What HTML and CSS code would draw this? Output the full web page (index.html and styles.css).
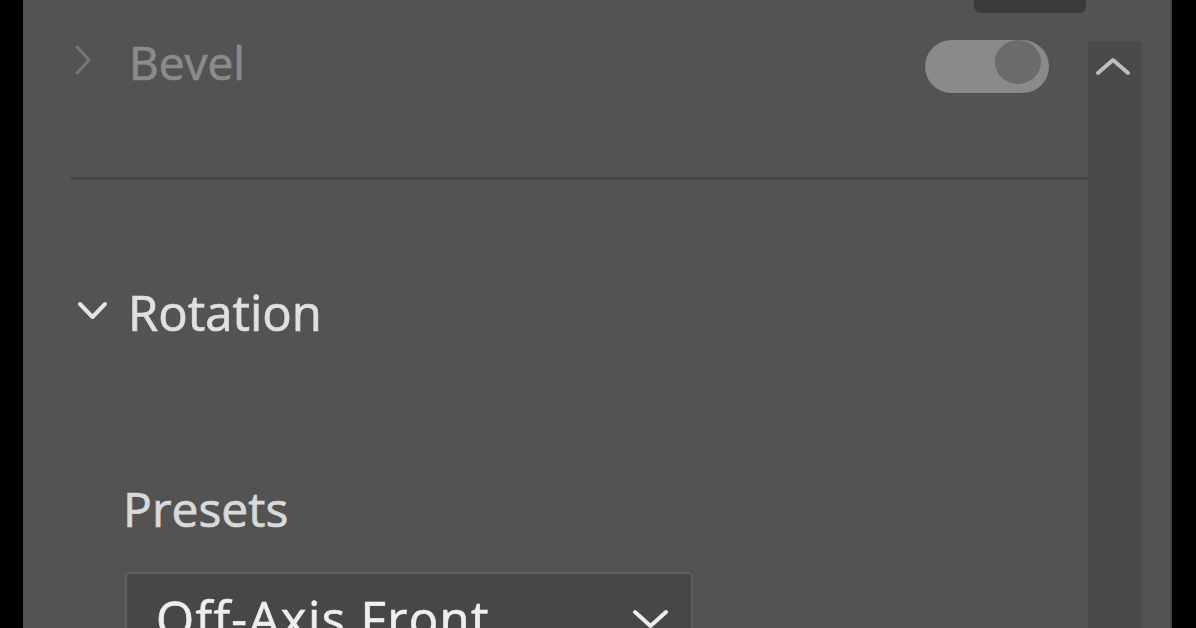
FILE: index.html
```html
<!DOCTYPE html>
<html>
<head>
<meta charset="utf-8">
<link rel="stylesheet" href="styles.css">
</head>
<body>
<div class="frame">
  <div class="panel">
    <div class="content">
      <div class="topbar"><div class="topbtn"></div></div>
      <div class="row bevel-row">
        <svg class="chev-right" width="18" height="32" viewBox="0 0 18 32"><polyline points="3,3 15,16 3,29" fill="none" stroke="#767676" stroke-width="3" stroke-linecap="round" stroke-linejoin="round"/></svg>
        <span class="title dim">Bevel</span>
        <div class="toggle"><div class="knob"></div></div>
      </div>
      <div class="divider"></div>
      <div class="row rot-row">
        <svg class="chev-down" width="31" height="22" viewBox="0 0 31 22"><polyline points="3,4 15.5,17 28,4" fill="none" stroke="#e4e4e4" stroke-width="4" stroke-linecap="round" stroke-linejoin="round"/></svg>
        <span class="title rot-title">Rotation</span>
      </div>
      <div class="label">Presets</div>
      <div class="select">
        <span class="select-text">Off-Axis Front</span>
        <svg class="select-chev" width="39" height="22" viewBox="0 0 39 22"><polyline points="4,4 19.5,18 35,4" fill="none" stroke="#ededed" stroke-width="4" stroke-linecap="round" stroke-linejoin="round"/></svg>
      </div>
    </div>
    <div class="scrollbar">
      <svg class="chev-up" width="36" height="20" viewBox="0 0 36 20"><polyline points="3,17 18,4 33,17" fill="none" stroke="#bdbdbd" stroke-width="4" stroke-linecap="round" stroke-linejoin="round"/></svg>
    </div>
    <div class="edge"></div>
  </div>
</div>
</body>
</html>
```

FILE: styles.css
```css
html, body {
  margin: 0;
  padding: 0;
  background: #000;
}
.frame {
  width: 1196px;
  height: 628px;
  display: flex;
  padding-left: 23px;
  padding-right: 24px;
  box-sizing: border-box;
  background: #000;
  overflow: hidden;
  font-family: "Open Sans", "Lato", sans-serif;
  font-weight: 500;
}
.panel {
  flex: 1;
  display: flex;
  background: #535353;
  overflow: hidden;
}
.content {
  flex: 1;
  display: flex;
  flex-direction: column;
}
.content > * {
  flex-shrink: 0;
}
.topbar {
  height: 13px;
  display: flex;
  justify-content: flex-end;
  padding-right: 2px;
}
.topbtn {
  width: 112px;
  height: 13px;
  background: #3b3b3b;
  border-radius: 0 0 6px 6px;
}
.row {
  display: flex;
  align-items: flex-start;
}
.bevel-row {
  margin-top: 19px;
  height: 61px;
  padding-left: 51px;
  padding-right: 39px;
}
.chev-right {
  margin-top: 12px;
  flex-shrink: 0;
}
.title {
  font-size: 49px;
  line-height: 60px;
  color: #e2e2e2;
  white-space: nowrap;
  -webkit-text-stroke: 0.7px currentColor;
}
.dim {
  font-size: 46px;
  color: #8b8b8b;
  margin-left: 37px;
}
.toggle {
  margin-left: auto;
  margin-top: 8px;
  width: 124px;
  height: 53px;
  border-radius: 27px;
  background: #8a8a8a;
  display: flex;
  align-items: flex-start;
  justify-content: flex-end;
  padding: 0 8px 0 0;
  box-sizing: border-box;
}
.knob {
  width: 46px;
  height: 44px;
  border-radius: 50%;
  background: #6b6b6b;
}
.divider {
  margin-top: 84px;
  margin-left: 47px;
  height: 3px;
  background: #474747;
}
.rot-row {
  margin-top: 102px;
  height: 60px;
  padding-left: 54px;
}
.chev-down {
  margin-top: 18px;
  flex-shrink: 0;
}
.rot-title {
  margin-left: 20px;
  color: #e0e0e0;
}
.label {
  margin-top: 137px;
  padding-left: 100px;
  font-size: 48px;
  line-height: 60px;
  color: #d9d9d9;
  -webkit-text-stroke: 0.7px currentColor;
}
.select {
  margin-top: 33px;
  margin-left: 102px;
  width: 568px;
  height: 90px;
  box-sizing: border-box;
  border: 2px solid #5f5f5f;
  border-radius: 6px;
  background: #474747;
  display: flex;
  align-items: flex-start;
  padding: 14px 21px 0 29px;
}
.select-text {
  font-size: 49px;
  line-height: 60px;
  letter-spacing: 1.4px;
  color: #eeeeee;
  white-space: nowrap;
  -webkit-text-stroke: 0.7px currentColor;
}
.select-chev {
  margin-left: auto;
  margin-top: 20px;
  flex-shrink: 0;
}
.scrollbar {
  width: 54px;
  margin-top: 41px;
  background: #4a4a4a;
  padding-top: 15px;
  padding-left: 7px;
  box-sizing: border-box;
}
.chev-up {
  display: block;
}
.edge {
  width: 30px;
  background: linear-gradient(to right, #535353 0, #535353 27px, #3a3a3a 30px);
}
```
